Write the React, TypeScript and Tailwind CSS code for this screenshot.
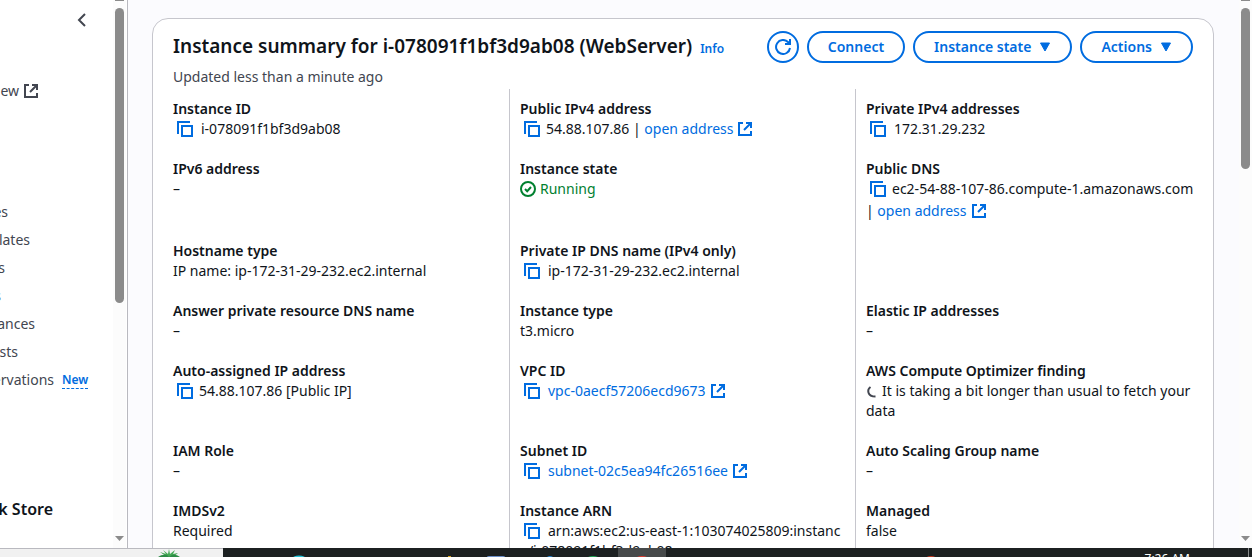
import type { ReactNode } from 'react';

function CopyButton({ label, gap = 'mr-2' }: { label: string; gap?: string }) {
  return (
    <button type="button" aria-label={`Copy ${label}`} className={`ml-1 inline-block size-4 align-[-3px] text-[#006ce0] ${gap}`}>
      <svg viewBox="0 0 16 16" className="block size-4" fill="none" stroke="currentColor" strokeWidth="2">
        <path d="M13 1H1v12" />
        <path d="M5 5h10v10H5z" />
      </svg>
    </button>
  );
}

function ExternalIcon() {
  return (
    <svg viewBox="0 0 16 16" className="ml-1 inline-block size-4 align-[-3px]" fill="none" stroke="currentColor" strokeWidth="2" aria-hidden="true">
      <path d="M6 2H2v12h12v-4" />
      <path d="M9 2h5v5M14 2 7 9" />
    </svg>
  );
}

function ExternalLink({ children }: { children: ReactNode }) {
  return (
    <a href="#" className="whitespace-nowrap text-[#006ce0]">
      {children}
      <ExternalIcon />
    </a>
  );
}

function Caret() {
  return (
    <svg viewBox="0 0 12 10" className="h-2.5 w-3" aria-hidden="true">
      <path d="M1.500 1h9L6 9z" fill="currentColor" stroke="currentColor" strokeLinejoin="round" />
    </svg>
  );
}

function ActionButton({ children, menu }: { children: ReactNode; menu?: boolean }) {
  return (
    <button type="button" className="flex h-8 items-center gap-2 rounded-full border-2 border-[#006ce0] px-[19px] text-sm font-semibold whitespace-nowrap text-[#006ce0]">
      {children}
      {menu && <Caret />}
    </button>
  );
}

function Scrollbar({ thumb }: { thumb: string }) {
  return (
    <div className="flex w-[13px] shrink-0 flex-col items-center bg-[#fcfcfc]" aria-hidden="true">
      <div className="mb-[7px] h-px w-[9px] shrink-0 bg-[#8b8b8b]" />
      <div className={`w-[9px] shrink-0 rounded-full bg-[#8b8b8b] ${thumb}`} />
      <svg viewBox="0 0 9 5" className="mt-auto mb-[7px] h-[5px] w-[9px] shrink-0">
        <path d="M0 0h9L4.500 5z" fill="#8b8b8b" />
      </svg>
    </div>
  );
}

type Field = { label: string; value?: ReactNode } | null;

const fields: Field[] = [
  { label: 'Instance ID', value: <><CopyButton label="instance ID" />i-078091f1bf3d9ab08</> },
  { label: 'Public IPv4 address', value: <><CopyButton label="public IPv4 address" gap="mr-1.5" />54.88.107.86 | <ExternalLink>open address</ExternalLink></> },
  { label: 'Private IPv4 addresses', value: <><CopyButton label="private IPv4 addresses" />172.31.29.232</> },
  { label: 'IPv6 address' },
  {
    label: 'Instance state',
    value: (
      <span className="text-[#00802f]">
        <svg viewBox="0 0 16 16" className="mr-1 inline-block size-4 align-[-3px]" fill="none" stroke="currentColor" strokeWidth="2" aria-hidden="true">
          <circle cx="8" cy="8" r="7" />
          <path d="m5 8 2.2 2.2L11 6" />
        </svg>
        Running
      </span>
    ),
  },
  {
    label: 'Public DNS',
    value: (
      <>
        <span className="whitespace-nowrap"><CopyButton label="public DNS" gap="mr-1.5" />ec2-54-88-107-86.compute-1.amazonaws.com</span>
        <span className="mt-0.5 block">| <ExternalLink>open address</ExternalLink></span>
      </>
    ),
  },
  { label: 'Hostname type', value: 'IP name: ip-172-31-29-232.ec2.internal' },
  { label: 'Private IP DNS name (IPv4 only)', value: <><CopyButton label="private IP DNS name" />ip-172-31-29-232.ec2.internal</> },
  null,
  { label: 'Answer private resource DNS name' },
  { label: 'Instance type', value: 't3.micro' },
  { label: 'Elastic IP addresses' },
  { label: 'Auto-assigned IP address', value: <><CopyButton label="auto-assigned IP address" gap="mr-1.5" />54.88.107.86 [Public IP]</> },
  { label: 'VPC ID', value: <><CopyButton label="VPC ID" /><ExternalLink>vpc-0aecf57206ecd9673</ExternalLink></> },
  {
    label: 'AWS Compute Optimizer finding',
    value: (
      <>
        <svg viewBox="0 0 12 12" className="mr-1 inline-block size-3 align-[-2px]" fill="none" stroke="#424650" strokeWidth="2" aria-hidden="true">
          <path d="M4.500 1C1 3.500 1 10.500 9.500 10.500" />
        </svg>
        It is taking a bit longer than usual to fetch your data
      </>
    ),
  },
  { label: 'IAM Role' },
  { label: 'Subnet ID', value: <><CopyButton label="subnet ID" /><ExternalLink>subnet-02c5ea94fc26516ee</ExternalLink></> },
  { label: 'Auto Scaling Group name' },
  { label: 'IMDSv2', value: 'Required' },
  { label: 'Instance ARN', value: <span className="break-all"><CopyButton label="instance ARN" />arn:aws:ec2:us-east-1:103074025809:instance/i-078091f1bf3d9ab08</span> },
  { label: 'Managed', value: 'false' },
];

const navItems = [
  { text: 'es', width: 'w-2' },
  { text: 'lates', width: 'w-[30px]' },
  { text: 's', width: 'w-[5px]' },
  { text: 's', width: 'w-px' },
  { text: 'ances', width: 'w-[35px]' },
  { text: 'sts', width: 'w-[18px]' },
  { text: 'ervations', width: 'w-[54px]', isNew: true },
];

function Sidebar() {
  return (
    <aside className="flex w-32 shrink-0 overflow-hidden border-r border-[#b9b9bf] bg-white pr-px text-sm text-[#424650]">
      <div className="flex min-w-0 flex-1 flex-col overflow-hidden">
        <button type="button" aria-label="Close navigation" className="mt-3 mr-[23px] size-4 shrink-0 self-end">
          <svg viewBox="0 0 16 16" className="size-4" fill="none" stroke="currentColor" strokeWidth="2">
            <path d="M11 2 5 8l6 6" />
          </svg>
        </button>
        <a href="#" className="mt-[53px] flex h-5 shrink-0 items-center">
          <span className="flex w-[19px] justify-end">ew</span>
          <ExternalIcon />
        </a>
        <nav className="mt-[97px] flex flex-col">
          {navItems.map((item, i) => (
            <a key={i} href="#" className="flex h-7 items-center">
              <span className={`flex justify-end ${item.width}`}>{item.text}</span>
              {item.isNew && <span className="ml-2 border-b border-dashed border-[#006ce0] text-xs leading-4 font-semibold text-[#006ce0]">New</span>}
            </a>
          ))}
        </nav>
        <h3 className="mt-[103px] flex w-[53px] shrink-0 justify-end text-base font-semibold whitespace-nowrap text-[#0f141a]">k Store</h3>
      </div>
      <Scrollbar thumb="h-[295px]" />
    </aside>
  );
}

function Taskbar() {
  return (
    <footer className="flex h-[9px] shrink-0 overflow-hidden bg-[#1c2021]">
      <div className="flex w-[223px] shrink-0 border-t border-[#b9b9bf] bg-[#f1f1f1]">
        <svg viewBox="0 0 24 8" className="ml-[157px] h-2 w-6" aria-hidden="true">
          <path d="M10 8 3 3l6 2-3-4 5 4 1-5 1 5 5-4-2 4 5-1-5 4z" fill="#43a854" />
          <path d="M1 8q4-3 9-2l2 2zM23 8q-4-3-8-2l-3 2z" fill="#2c8a45" />
        </svg>
      </div>
      <svg viewBox="223 0 800 9" className="h-[9px] w-[800px] shrink-0" aria-hidden="true">
        <ellipse cx="299" cy="11" rx="7" ry="3.500" fill="#27c4d9" />
        <path d="M448 8h3v1h-3z" fill="#d9a520" />
        <path d="M487 9q0-1 2-1h14q2 0 2 1z" fill="#6b8fc9" />
        <path d="M547 9q3-2 6 0z" fill="#2b8bd8" />
        <ellipse cx="593" cy="11" rx="7" ry="3" fill="#21a856" />
        <path d="M618 0h48v9h-48z" fill="#46494a" />
        <ellipse cx="642" cy="11" rx="7" ry="3" fill="#e03b30" />
        <ellipse cx="931" cy="11" rx="6" ry="3" fill="#c93a22" />
      </svg>
      <div className="ml-auto flex shrink-0 items-start">
        <time className="mr-[58px] pt-[3px] text-xs leading-4 text-white">7:26 AM</time>
        <span className="mr-[3px] h-[9px] w-px bg-[#8a8c8d]" />
      </div>
    </footer>
  );
}

export default function App() {
  return (
    <div className="flex h-screen flex-col overflow-hidden bg-white font-['Noto_Sans',sans-serif] text-sm leading-5 text-[#0f141a]">
      <div className="flex min-h-0 flex-1">
        <Sidebar />
        <main className="min-w-0 flex-1 overflow-hidden bg-[#fbfbfe] pt-[18px] pr-[25px] pl-6">
          <section className="rounded-2xl border border-[#c6c6cd] bg-white px-5">
            <header className="flex items-start justify-between pt-3">
              <div>
                <h1 className="text-[19px] leading-[30px] font-semibold whitespace-nowrap">
                  Instance summary for i-078091f1bf3d9ab08 (WebServer)
                  <a href="#" className="ml-2 text-xs text-[#006ce0]">Info</a>
                </h1>
                <p className="mt-1.5 text-[#424650]">Updated less than a minute ago</p>
              </div>
              <div className="flex gap-2">
                <button type="button" aria-label="Refresh" className="flex size-8 items-center justify-center rounded-full border-2 border-[#006ce0] text-[#006ce0]">
                  <svg viewBox="0 0 16 16" className="size-4" fill="none" stroke="currentColor" strokeWidth="2">
                    <path d="M15 9a7 7 0 1 1-2-6l2 2" />
                    <path d="M15 0v5h-5" />
                  </svg>
                </button>
                <ActionButton>Connect</ActionButton>
                <ActionButton menu>Instance state</ActionButton>
                <ActionButton menu>Actions</ActionButton>
              </div>
            </header>
            <dl className="-mr-2 -ml-2.5 mt-0.5 grid grid-cols-3">
              {fields.map((field, i) => (
                <div key={i} className={`min-w-0 px-2.5 pb-5 ${i % 3 ? 'border-l border-[#c6c6cd]' : ''} ${i < 3 ? 'pt-2.5' : ''}`}>
                  {field && (
                    <>
                      <dt className="font-semibold">{field.label}</dt>
                      <dd className="wrap-anywhere">{field.value ?? '–'}</dd>
                    </>
                  )}
                </div>
              ))}
            </dl>
          </section>
        </main>
        <Scrollbar thumb="h-[161px]" />
      </div>
      <Taskbar />
    </div>
  );
}
